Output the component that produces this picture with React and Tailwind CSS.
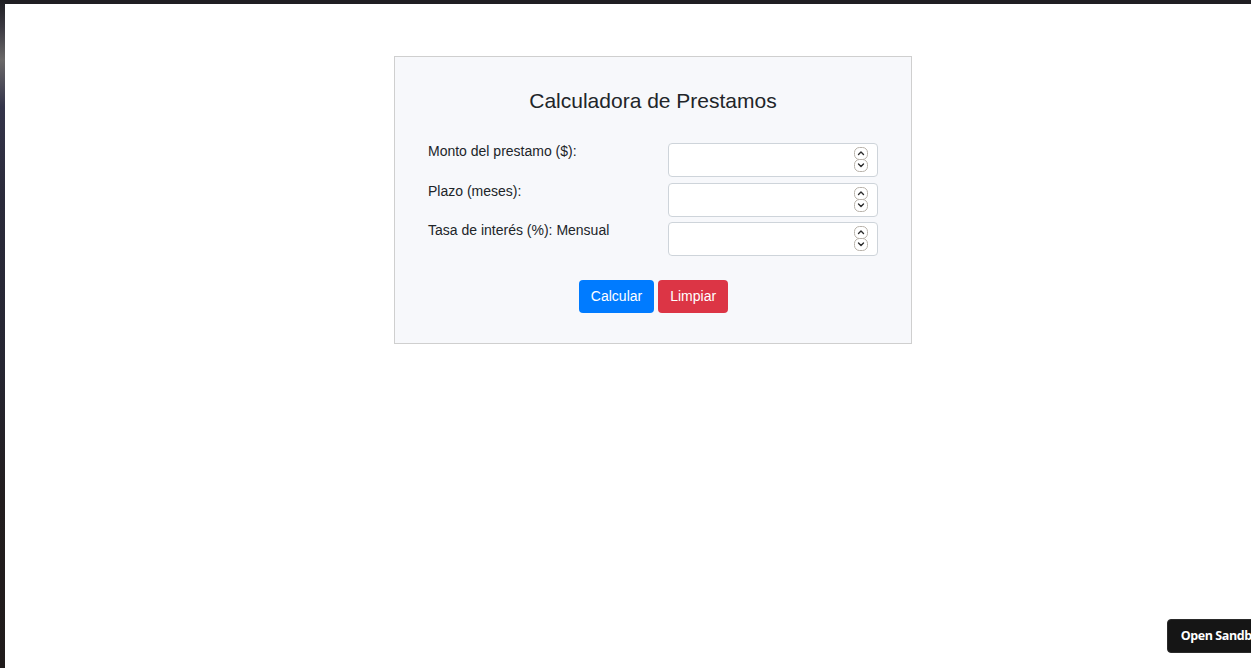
function Spinner() {
  return (
    <div className="absolute right-[10px] top-[4px] flex flex-col">
      <svg width="14" height="13" viewBox="0 0 14 13" fill="none">
        <rect x="0.5" y="0.5" width="13" height="12" rx="5" stroke="#b8b2aa" fill="#ffffff" />
        <path d="M4.5 7.5 L7 5 L9.5 7.5" stroke="#2b2b2b" strokeWidth="1.4" strokeLinecap="round" strokeLinejoin="round" />
      </svg>
      <svg width="14" height="13" viewBox="0 0 14 13" fill="none" className="-mt-[1px]">
        <rect x="0.5" y="0.5" width="13" height="12" rx="5" stroke="#b8b2aa" fill="#ffffff" />
        <path d="M4.5 5 L7 7.5 L9.5 5" stroke="#2b2b2b" strokeWidth="1.4" strokeLinecap="round" strokeLinejoin="round" />
      </svg>
    </div>
  )
}

function Field({ label }) {
  return (
    <div className="flex">
      <label className="w-[240px] text-[14px] leading-[21px] -mt-[2px] text-[#212529]">{label}</label>
      <div className="relative w-[210px] h-[34px]">
        <input
          type="text"
          className="w-full h-full bg-white border border-[#ced4da] rounded-[4px] px-3 text-[14px] outline-none"
        />
        <Spinner />
      </div>
    </div>
  )
}

export default function App() {
  return (
    <div className="min-h-[668px] h-[668px] overflow-hidden bg-[#1f1e22] pt-[4px] pl-[5px] relative font-['Liberation_Sans',Arial,sans-serif]">
      {/* left window frame */}
      <div className="absolute left-0 top-0 w-[5px] h-full bg-[linear-gradient(180deg,#1e1e22_0%,#3a3840_4%,#6a6868_9%,#34344a_16%,#2a2a3a_30%,#262632_55%,#221d1e_75%,#201b1b_100%)]"></div>

      <div className="relative bg-white h-full pt-[52px] overflow-hidden">
        <div className="ml-[389px] w-[518px] bg-[#f7f8fb] border border-[#cfcfcf] px-[33px] pt-[31px] pb-[30px]">
          <h1 className="text-center text-[21px] leading-[25px] text-[#212529] mb-[30px]">Calculadora de Prestamos</h1>

          <div className="flex flex-col gap-[5.5px]">
            <Field label="Monto del prestamo ($):" />
            <Field label="Plazo (meses):" />
            <Field label="Tasa de interés (%): Mensual" />
          </div>

          <div className="flex justify-center gap-[4px] mt-[24px]">
            <button className="bg-[#007bff] text-white text-[14px] leading-[21px] px-3 py-[6px] rounded-[4px] ml-[1px]">Calcular</button>
            <button className="bg-[#dc3545] text-white text-[14px] leading-[21px] px-3 py-[6px] rounded-[4px]">Limpiar</button>
          </div>
        </div>

        <button className="absolute right-[-28px] bottom-[15px] bg-[#151515] text-white text-[12.5px] tracking-[-0.4px] font-bold font-['Open_Sans',sans-serif] leading-[20px] pl-[13px] pr-[12px] py-[6px] rounded-[4px] border border-[#2a2a2a] whitespace-nowrap">
          Open Sandbox
        </button>
      </div>
    </div>
  )
}
